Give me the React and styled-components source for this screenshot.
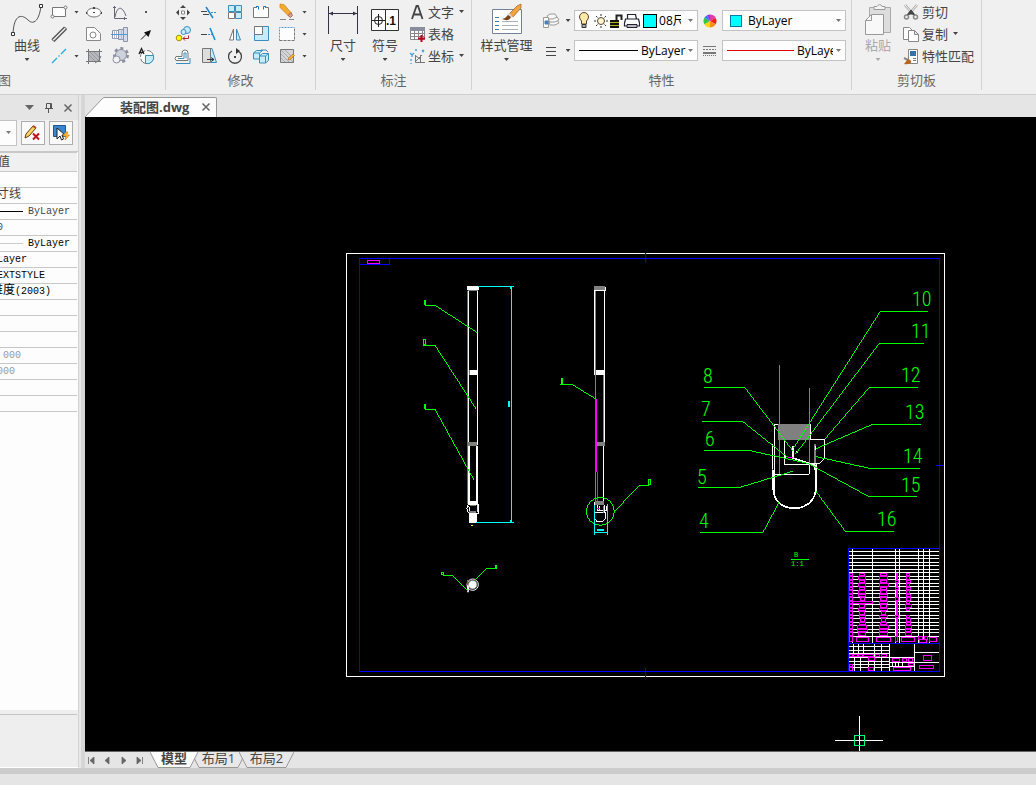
import React from 'react';
import styled, { createGlobalStyle } from 'styled-components';

const GlobalStyle = createGlobalStyle`
  * {
    box-sizing: border-box;
  }

  body {
    margin: 0;
    background: #e5e5e5;
    color: #444;
    font: 13px/18px 'Open Sans', 'Noto Sans CJK SC', sans-serif;
  }

  button, select {
    margin: 0;
    padding: 0;
    border: 0;
    border-radius: 0;
    background: none;
    color: inherit;
    font: inherit;
  }
`;

const Page = styled.div`
  display: flex;
  flex-direction: column;
  height: 100vh;
  overflow: hidden;
`;

const Ribbon = styled.header`
  display: flex;
  height: 95px;
  flex-shrink: 0;
  padding-bottom: 4px;
  background: #f0f0f0;
  border-bottom: 1px solid #cfcfcf;
`;

const Group = styled.section`
  display: flex;
  flex-direction: column;
  flex: none;
  padding-top: 1px;
  border-right: 1px solid #d2d2d2;
`;

const GroupBody = styled.div`
  display: flex;
  height: 70px;
  padding: 0 ${(props) => props.$right}px 0 ${(props) => props.$left}px;
`;

const GroupTitle = styled.h2`
  margin: 0;
  color: #666;
  font-size: 13px;
  font-weight: 400;
  line-height: 18px;
  text-align: ${(props) => props.$align || 'center'};
`;

const LargeButton = styled.button`
  display: flex;
  flex-direction: column;
  align-items: center;
  width: ${(props) => props.$width || 42}px;
  padding-top: 2px;
  white-space: nowrap;

  &:disabled {
    color: #aaa;
  }
`;

const LargeIcon = styled.svg`
  width: 34px;
  height: 34px;
  flex: none;
`;

const LargeLabel = styled.span`
  height: 21px;
  line-height: 17px;
`;

const Arrow = styled.i`
  width: 5px;
  height: 3px;
  flex: none;
  background: ${(props) => props.$color || '#444'};
  clip-path: polygon(0 0, 100% 0, 50% 100%);
`;

const ToolGrid = styled.div`
  display: grid;
  grid-template-columns: ${(props) => props.$columns};
  grid-auto-rows: 22px;
`;

const ToolButton = styled.button`
  display: flex;
  align-items: center;
  justify-content: center;
`;

const SmallIcon = styled.svg`
  width: 20px;
  height: 20px;
  flex: none;
`;

const CommandList = styled.div`
  display: flex;
  flex-direction: column;
  padding-left: 1px;
`;

const Command = styled.button`
  display: flex;
  align-items: center;
  height: 22px;
  padding-bottom: 1px;
  gap: 1px;
  white-space: nowrap;

  ${Arrow} {
    margin-left: 4px;
  }
`;

const PropertyGrid = styled.div`
  display: grid;
  grid-template-columns: 22px 12px 124px 24px 124px;
  grid-auto-rows: 21px;
  gap: 9px 0;
  padding-top: 9px;
`;

const Combo = styled.label`
  display: flex;
  align-items: center;
  min-width: 0;
  padding: 0 4px;
  background: #fdfdfd;
  border: 1px solid #c3c3c3;
  color: #000;
  font-size: 12px;
`;

const ComboSelect = styled.select`
  flex: ${(props) => (props.$width ? 'none' : '1')};
  width: ${(props) => (props.$width ? `${props.$width}px` : 'auto')};
  min-width: 0;
  height: 19px;
  margin-left: ${(props) => props.$gap || 0}px;
  appearance: none;
  outline: none;
  text-overflow: clip;
`;

const ComboArrow = styled(Arrow)`
  margin-left: auto;
`;

const Swatch = styled.i`
  width: ${(props) => props.$size}px;
  height: ${(props) => props.$size}px;
  flex: none;
  margin-left: ${(props) => props.$gap || 0}px;
  background: #0ff;
  border: 1px solid ${(props) => props.$border};
`;

const LineSample = styled.i`
  width: ${(props) => props.$width}px;
  height: 1px;
  flex: none;
  background: ${(props) => props.$color};
`;

const Workspace = styled.main`
  display: flex;
  flex: 1;
  min-height: 0;
`;

const Panel = styled.aside`
  display: flex;
  flex-direction: column;
  width: 79px;
  flex: none;
  overflow: hidden;
  background: #eee;
  border-right: 1px solid #d2d2d2;
  border-bottom: 1px solid #fff;
`;

const PanelHeader = styled.div`
  display: flex;
  align-items: center;
  justify-content: flex-end;
  height: 25px;
  flex: none;
  padding-right: 1px;
  background: #e5e5e5;
`;

const PanelHeaderButton = styled.button`
  display: flex;
  align-items: center;
  justify-content: center;
  width: 19px;
`;

const PanelTools = styled.div`
  display: flex;
  align-items: center;
  height: 31px;
  flex: none;
  padding-bottom: 6px;
  gap: 4px;
  background: #f0f0f0;
`;

const FilterSelect = styled.label`
  display: flex;
  align-items: center;
  width: 17px;
  height: 26px;
  padding: 0 5px 0 0;
  background: #fdfdfd;
  border: 1px solid #c3c3c3;
  border-left: 0;
`;

const FramedButton = styled.button`
  display: flex;
  align-items: center;
  justify-content: center;
  width: 24px;
  height: 24px;
  background: #fafafa;
  border: 1px solid #adadad;
`;

const PropertySheet = styled.div`
  flex: 1;
  min-height: 0;
  padding-right: 1px;
  background: #fdfdfd;
  border-top: 1px solid #c8c8c8;
`;

const PropertyTable = styled.table`
  width: 100%;
  border-collapse: collapse;
  border-top: 1px solid #c8c8c8;
  table-layout: fixed;
  font: 12px/15px 'Liberation Mono', 'Noto Sans CJK SC', monospace;

  th {
    height: 19px;
    padding: 2px 0 0;
    background: #f0f0f0;
    border-bottom: 1px solid #c8c8c8;
    font-weight: 400;
    text-align: left;
    text-indent: -2px;
  }
`;

const PropertyCell = styled.td`
  height: 16px;
  padding: 0;
  border-bottom: 1px solid #c8c8c8;
  color: ${(props) => props.$color || '#444'};
  font-size: ${(props) => (props.$latin ? 10 : 12)}px;
  line-height: 15px;
  text-indent: ${(props) => props.$indent}px;
  white-space: nowrap;
`;

const LineValue = styled.span`
  display: flex;
  align-items: center;
  gap: 5px;
  text-indent: 0;
`;

const PanelHint = styled.div`
  height: 57px;
  flex: none;
  margin-right: 1px;
  border-top: 4px solid #eee;

  &::before {
    content: '';
    display: block;
    border-top: 1px solid #c3c3c3;
  }
`;

const Splitter = styled.div`
  width: 6px;
  flex: none;
  background: #d6d6d6;
  border-left: 2px solid #e8e8e8;
`;

const DocumentArea = styled.div`
  display: flex;
  flex-direction: column;
  flex: 1;
  min-width: 0;
`;

const DocumentTabs = styled.nav`
  display: flex;
  align-items: flex-end;
  height: 22px;
  flex: none;
`;

const TabSlope = styled.svg`
  width: 20px;
  height: 20px;
`;

const DocumentTab = styled.div`
  display: flex;
  align-items: center;
  height: 20px;
  padding: 0 1px 2px 15px;
  gap: 7px;
  background: #fdfdfd;
  border: solid #999;
  border-width: 1px 1px 0 0;
  border-radius: 0 2px 0 0;
  font-size: 13px;
  font-weight: 700;
`;

const Canvas = styled.svg`
  display: block;
  width: 100%;
  min-height: 0;
  flex: 1;
  background: #000;
`;

const LayoutBar = styled.nav`
  display: flex;
  height: 17px;
  flex: none;
  border-top: 1px solid #666;
`;

const NavButton = styled.button`
  display: flex;
  align-items: center;
  width: 16px;
  padding-left: 2px;
`;

const LayoutTab = styled.button`
  display: grid;
  width: ${(props) => props.$width}px;
  margin-left: ${(props) => (props.$active ? 1 : -7)}px;
  z-index: ${(props) => (props.$active ? 1 : 0)};
  font-weight: ${(props) => (props.$active ? 700 : 400)};
  line-height: 13px;

  > * {
    grid-area: 1 / 1;
  }
`;

const LayoutShape = styled.svg`
  width: 100%;
  height: 16px;
`;

const StatusBar = styled.footer`
  height: 17px;
  flex: none;
  border-top: 6px solid #ccc;
`;

const steel = '#667';
const blue = '#3c8dbc';
const pale = '#c4ecfb';

const icons = {
  rect: (
    <g fill="#fdfdfd" stroke="#777">
      <path d="M3.500 5.500h13v9h-13z" />
      <circle cx="3.500" cy="14.500" r="1.500" />
      <circle cx="16.500" cy="5.500" r="1.500" />
    </g>
  ),
  ellipse: (
    <g fill="#fdfdfd" stroke="#777">
      <ellipse cx="10" cy="10.500" rx="7" ry="4.500" />
      <path d="M9 5h2v2H9zM2 10h1v2H2zM17 10h1v2h-1z" fill="#444" stroke="none" />
      <path d="M9 10.500h2" stroke="#444" />
    </g>
  ),
  graph: <path d="M4.500 4v12.500H17M3 5.500h3M14.500 15v3M5 15C7 4 12 3 16 14" fill="none" stroke={steel} />,
  point: <path d="M9 9h2v2H9z" fill="#555" />,
  parallel: (
    <g stroke="#555" fill="none">
      <path d="M3 15.500 15.500 3M5 17.500 17.500 5" strokeWidth="1.400" />
      <path d="m3 15.500 2 2M15.500 3l2 2" />
    </g>
  ),
  region: (
    <g fill="#fdfdfd" stroke="#888">
      <path d="M2.500 3.500h8l6 6v7h-14z" />
      <circle cx="9" cy="11" r="3" />
    </g>
  ),
  screw: (
    <g stroke="#8a93ab">
      <path d="M2.500 6.500h6v8h-6z" fill="#fff" />
      <path d="M8.500 5.500h5v10h-5zM13.500 3.500h4v14h-4z" fill="#d5dae8" />
      <path d="M4.500 6.500v8M6.500 6.500v8M11.500 5.500v10" fill="none" stroke="#b4bbcc" />
      <path d="M1 10.500h17" stroke="#4b9bd8" fill="none" />
    </g>
  ),
  leader: (
    <g fill="#111">
      <path d="M5 15.500 11 9.500" stroke="#111" />
      <path d="m15 6-7 2.500 4.500 4.500z" />
    </g>
  ),
  line: <path d="m3 17 5-5m1.500-1.500 1-1M12 8l5-5" stroke="#28abe0" fill="none" strokeWidth="1.400" />,
  hatch: (
    <g stroke="#777" fill="none">
      <path d="M4.500 5.500h11v10h-11z" fill="#b5b8bf" />
      <path d="M2 5.500h16M2 15.500h15M4.500 3v15M15.500 3v10" />
      <path d="M6 6l9 9M10 6l5 5M5 9l6 6" stroke="#999" />
      <path d="M11 17q5-2 6-7" />
    </g>
  ),
  gear: (
    <g stroke="#8b90a0" fill="#ccd1dc">
      <circle cx="11" cy="9" r="6.500" fill="none" strokeWidth="3" strokeDasharray="2.920 2.920" />
      <circle cx="11" cy="9" r="5.500" />
      <circle cx="6.500" cy="13.500" r="3.500" fill="#f3f3f3" />
    </g>
  ),
  circleA: (
    <g>
      <circle cx="11" cy="11" r="6.500" fill="#fff" stroke="#777" strokeDasharray="8 2" />
      <path d="M9.500 9.500h8a6.500 6.500 0 0 1-8 8z" fill={pale} stroke={blue} />
      <path d="m3 8 2.500-5.500L8 8M4 6.500h3" fill="none" stroke="#222" strokeWidth="1.300" />
    </g>
  ),
  move: (
    <g fill="#444">
      <path d="m10 3-3 3h6zM10 18l-3-3h6zM3 10.500l3-3v6zM17 10.500l-3-3v6z" />
      <path d="M8.500 9h3v3h-3z" fill="#fff" stroke="#888" />
    </g>
  ),
  trim: (
    <g fill="none">
      <path d="M2 9.500h6M4 12.500h6" stroke="#444" />
      <path d="M12 10.500h6" stroke={blue} strokeDasharray="2 1" />
      <path d="m7 5 7 11" stroke="#1686cf" strokeWidth="1.500" />
    </g>
  ),
  array: (
    <g stroke={blue} fill={pale}>
      <path d="M3.500 3.500h6v6h-6zM10.500 3.500h6v6h-6zM10.500 10.500h6v6h-6z" />
      <path d="M3.500 10.500h6v6h-6z" fill="#fff" stroke="#777" />
    </g>
  ),
  breakAt: (
    <g fill="#fdfdfd" stroke="#777">
      <path d="M6 5.500H2.500v10h15v-10H14" />
      <path d="M5 4.500h2.500v3M15 4.500h-2.500v3" stroke="#1d79bd" fill="none" />
    </g>
  ),
  erase: (
    <g>
      <path d="m3 2 4 .5 7 8-3 3-8-8z" fill="#f4a92f" stroke="#c9861d" strokeWidth=".7" />
      <path d="m11 13.500 3-3 1.500 3-2 2z" fill="#dfa08a" stroke="#8d4b3b" strokeWidth=".7" />
      <path d="M3 17.500h6m3 0h5" stroke="#888" />
    </g>
  ),
  copy: (
    <g>
      <circle cx="14" cy="6" r="3.500" fill={pale} stroke={blue} />
      <circle cx="10.500" cy="8" r="2.500" fill={pale} stroke={blue} />
      <circle cx="6" cy="14" r="2.800" fill="#ff0" stroke="#aa8d14" />
      <path d="M10 14.500h5.500v-3m-3.500 1-2 2 2 2" fill="none" stroke="#b2222a" />
    </g>
  ),
  extend: (
    <g fill="none">
      <path d="M2 10.500h6" stroke="#444" />
      <path d="M9 10.500h4" stroke={blue} strokeDasharray="2 1" />
      <path d="m11 4 5 12" stroke="#1686cf" strokeWidth="1.500" />
    </g>
  ),
  mirror: (
    <g stroke="#777">
      <path d="m8.500 5 0 11h-4z" fill="#fff" />
      <path d="m11.500 5 0 11h4z" fill={pale} stroke={blue} />
    </g>
  ),
  scale: (
    <g>
      <path d="M3.500 2.500h14v14h-14z" fill={pale} stroke={blue} />
      <path d="M3.500 2.500h8v8h-8z" fill="#fff" stroke="#777" />
    </g>
  ),
  stretch: (
    <g fill="none">
      <path d="M2.500 3.500h15v13h-15z" fill="#fdfdfd" stroke="none" />
      <path d="M2.500 16.500v-13h15" stroke="#4b9bd8" strokeDasharray="2 1" />
      <path d="M2.500 16.500h15v-13" stroke="#777" strokeDasharray="3 1" />
    </g>
  ),
  offset: (
    <g fill="none">
      <path d="M3 10.500h6V7a3 3 0 0 1 6 0v7.500H3q-2-2 0-4z" stroke="#777" fill="#fdfdfd" />
      <path d="M5 12.500h6V7h2v5.500M3 17.500h14V12" stroke={blue} />
    </g>
  ),
  taper: (
    <g>
      <path d="M11 2.500h2l4.500 14H11z" fill={pale} stroke={blue} />
      <path d="M3.500 2.500h8v14h-8z" fill="#ddd" stroke="#777" />
      <path d="M8 13.500h7m-3-2 3 2-3 2" fill="none" stroke="#333" />
    </g>
  ),
  rotate: (
    <g fill="none" stroke="#444">
      <path d="M13 5a6.500 6.500 0 1 1-6 0" strokeWidth="1.300" />
      <path d="m11 2 4 3-4 3z" fill="#333" stroke="none" />
      <path d="M9 10h2v2H9z" fill="#444" stroke="none" />
    </g>
  ),
  blocks: (
    <g fill={pale} stroke={blue}>
      <path d="m2.500 7 3-2.500h6l-3 2.500v6h-6zM2.500 7h6" />
      <path d="m8.500 10 3-2.500h6v7l-3 2.500h-6zM8.500 10h6v7m0-7 3-2.500" />
      <path d="M10 4h5l2 2" fill="none" />
    </g>
  ),
  hatchEdit: (
    <g fill="none">
      <path d="M3.500 3.500h13v13h-13z" fill="#d3d5d9" stroke="#777" />
      <path d="m4 8 8 8M8 4l8 8M4 4l12 12M4 12l4 4" stroke="#aaa" />
      <path d="m11 14 1-2.500L16 8l1.500 1.500-4 4z" fill="#f6ad34" stroke="#a35e1d" strokeWidth=".5" />
    </g>
  ),
  letterA: <path d="m5 17 4.500-13h1.500L15.500 17M7 12.500h7" fill="none" stroke="#444" strokeWidth="1.800" />,
  table: (
    <g fill="#fdfdfd" stroke="#888">
      <path d="M3.500 4.500h14v11h-14zM3 9.500h14M3 12.500h14M7.500 6v10M11.500 6v10M15.500 6v7" />
      <path d="M3 3h15v4H3z" fill="#888e9c" stroke="none" />
      <path d="M14.500 11v7M11 14.500h7" stroke="#c00018" strokeWidth="2" />
    </g>
  ),
  coordinate: (
    <g fill="none">
      <path d="m3 7 2 2 2-2M5 9v2M8 4h2M15 4l2 2m0-2-2 2M4 13v2M4 17v1" stroke="#4b9bd8" strokeWidth="1.300" />
      <path d="M8.500 9v7.500H18M8 16l7-7M13.500 9v8M9 10l4 3" stroke="#777" />
    </g>
  ),
  layerMatch: (
    <g fill="#f8f8f8" stroke="#9a9a9a">
      <path d="m8 11 3-2h5l2 3-4 2H9z" />
      <path d="m7 8 3-2h6l2 3-4 2H9z" />
      <path d="m6 5 3-2h5l2 3-4 2H8z" />
      <path d="M2.500 6.500h5v10h-5z" fill="#fff" />
      <path d="M4 10h3v3H4z" fill="#4b83b9" stroke="#4b83b9" />
    </g>
  ),
  lineWeight: <path d="M5 6.500h10M5 10.500h10M5 14.500h10" stroke="#444" shapeRendering="crispEdges" />,
  lineType: (
    <g stroke="#777" shapeRendering="crispEdges">
      <path d="M3 5.500h13" />
      <path d="M3 8.500h13" strokeDasharray="2 1" />
      <path d="M3 11.500h13" strokeWidth="2" />
      <path d="M3 14.500h13" strokeDasharray="1 1" />
    </g>
  ),
  wheel: (
    <g>
      <path d="M10 10V3.500a6.500 6.500 0 0 1 5.600 3.300z" fill="#e23ba8" />
      <path d="M10 10l5.600-3.200a6.500 6.500 0 0 1 0 6.500z" fill="#f21c1c" />
      <path d="M10 10l5.600 3.300A6.500 6.500 0 0 1 10 16.500z" fill="#ff8c1a" />
      <path d="M10 10v6.500a6.500 6.500 0 0 1-5.600-3.200z" fill="#f4d514" />
      <path d="m10 10-5.600 3.300a6.500 6.500 0 0 1 0-6.500z" fill="#33c24a" />
      <path d="M10 10 4.400 6.800a6.500 6.500 0 0 1 2.400-2.400z" fill="#2e7df0" />
      <path d="M10 10 6.800 4.400A6.500 6.500 0 0 1 10 3.500z" fill="#8d3bea" />
    </g>
  ),
  cut: (
    <g fill="none" stroke="#888">
      <path d="m4 3 8 9M16 3l-8 9" stroke="#aaa" strokeWidth="2.600" />
      <path d="m4 3 8 9M16 3l-8 9" stroke="#f5f5f5" />
      <path d="m10 8 4 5-3-1h-2l-3 1z" fill="#444" stroke="#444" />
      <circle cx="5.500" cy="15" r="2" strokeWidth="1.500" />
      <circle cx="14.500" cy="15" r="2" strokeWidth="1.500" />
    </g>
  ),
  copyPages: (
    <g fill="#fff" stroke="#888">
      <path d="M2.500 3.500h6l3 3v9h-9z" />
      <path d="M7.500 6.500h6l4 4v7h-10zM13.500 6.500v4h4" />
    </g>
  ),
  matchProps: (
    <g>
      <path d="M7.500 3.500h9v14h-9z" fill="#fff" stroke="#888" />
      <path d="M9 5h6v5H9z" fill="#3472ac" />
      <path d="M12 12.500h3M12 14.500h3" stroke="#777" />
      <path d="m3 12 4 2" stroke="#888" strokeWidth="2" />
      <path d="M7 13q4 1 3 4-4 2-7 1z" fill="#b5651d" />
    </g>
  ),
  pencilDelete: (
    <g>
      <path d="m2 15 1-4 7-8 3 2-7 8z" fill="#ffd45a" stroke="#6b3d12" />
      <path d="m10 3 3 2" stroke="#b5422c" strokeWidth="2" />
      <path d="m10 10.500 6 6m0-6-6 6" stroke="#c4151c" strokeWidth="2" />
    </g>
  ),
  quickSelect: (
    <g>
      <path d="M2.500 2.500h12v11h-12z" fill="#3c86cf" stroke="#1e568f" />
      <path d="M6 5v11l3-3 1.500 4 2-1-1.500-4h3z" fill="#fff" stroke="#222" />
      <path d="m15 9-3 4h3l-1 4 4.500-5h-3l1.500-3z" fill="#ffc433" stroke="#d97f0d" strokeWidth=".7" />
    </g>
  ),
  close: <path d="m6.500 6.500 7 7m0-7-7 7" stroke="#666" strokeWidth="1.500" />,
  pin: <path d="M7.500 10V5.500h5V10M11.500 5v5M6 10.500h8M9.500 11v4" fill="none" stroke="#555" />,
};

function Icon({ name }) {
  return (
    <SmallIcon viewBox="0 0 20 20" aria-hidden="true">
      {icons[name]}
    </SmallIcon>
  );
}

function Tool({ name, label }) {
  return (
    <ToolButton type="button" aria-label={label}>
      {name === 'more' ? <Arrow /> : <Icon name={name} />}
    </ToolButton>
  );
}

const drawTools = [
  ['rect', '矩形'], ['more', '矩形选项'], ['ellipse', '椭圆'], ['graph', '公式曲线'], ['point', '点'],
  ['parallel', '平行线'], null, ['region', '局部放大'], ['screw', '轴'], ['leader', '箭头'],
  ['line', '中心线'], ['more', '中心线选项'], ['hatch', '填充'], ['gear', '齿轮'], ['circleA', '圆弧'],
];

const editTools = [
  ['move', '移动'], ['trim', '裁剪'], ['array', '阵列'], ['breakAt', '打断'], ['erase', '删除'], ['more', '删除选项'],
  ['copy', '平移复制'], ['extend', '延伸'], ['mirror', '镜像'], ['scale', '缩放'], ['stretch', '拉伸'], ['more', '拉伸选项'],
  ['offset', '等距线'], ['taper', '过渡'], ['rotate', '旋转'], ['blocks', '分解'], ['hatchEdit', '编辑填充'], ['more', '编辑选项'],
];

function Tools({ items, columns }) {
  return (
    <ToolGrid $columns={columns}>
      {items.map((item, i) => (
        item ? <Tool key={item[1]} name={item[0]} label={item[1]} /> : <span key={i} />
      ))}
    </ToolGrid>
  );
}

function LayerIcons() {
  return (
    <svg width="61" height="17" viewBox="0 0 61 17" aria-hidden="true">
      <path d="M.5 5a4.500 4.500 0 0 1 9 0q0 2-2 4v3h-5V9q-2-2-2-4z" fill="#ffe9a8" stroke="#54452a" />
      <path d="M3 12.500h4v3H3z" fill="#aaa" stroke="#333" />
      <circle cx="22" cy="9" r="3.500" fill="#fff5cf" stroke="#5b452c" />
      <path d="M22 2v2m0 10v2M15 9h2m10 0h2M17 4l1.500 1.500m7 7L27 14m0-10-1.500 1.500m-7 7L17 14" stroke="#333" />
      <path d="M31 8h9v8h-9z" fill="#111" />
      <path d="M31 10.500h9M31 13.500h9" stroke="#b2b21c" />
      <path d="M37.500 8V3.500h5V8" fill="none" stroke="#222" strokeWidth="2" />
      <path d="M48.500 7V2.500h8l1 4.500M46.500 7h13l1 4v3h-15v-3z" fill="#fff" stroke="#223" strokeWidth="1.200" />
      <path d="M48 12.500h10v3H48z" fill="#bbb" stroke="#223" />
    </svg>
  );
}

const DrawTitle = styled.span`
  margin-left: -2px;
`;

function RibbonBar() {
  return (
    <Ribbon>
      <Group>
        <GroupBody $left={8} $right={6}>
          <LargeButton type="button" $width={38}>
            <LargeIcon viewBox="0 0 34 34">
              <path d="M3 31c1-22 10-19 15-14s11 2 13-14" fill="none" stroke="#555" />
              <path d="M1.500 29.500h3v3h-3zM29.500 1.500h3v3h-3z" fill="#fff" stroke="#333" />
            </LargeIcon>
            <LargeLabel>曲线</LargeLabel>
            <Arrow />
          </LargeButton>
          <Tools items={drawTools} columns="26px 9px 26px 26px 26px" />
        </GroupBody>
        <GroupTitle $align="left"><DrawTitle>图</DrawTitle></GroupTitle>
      </Group>

      <Group>
        <GroupBody $left={4} $right={6}>
          <Tools items={editTools} columns="repeat(5, 26px) 9px" />
        </GroupBody>
        <GroupTitle>修改</GroupTitle>
      </Group>

      <Group>
        <GroupBody $left={6} $right={7}>
          <LargeButton type="button">
            <LargeIcon viewBox="0 0 34 34">
              <path d="M2.500 3v28M31.500 3v28M3 10.500h28" stroke="#334" />
              <path d="m3 10.500 4-2v4zM31 10.500l-4-2v4z" fill="#334" />
            </LargeIcon>
            <LargeLabel>尺寸</LargeLabel>
            <Arrow />
          </LargeButton>
          <LargeButton type="button">
            <LargeIcon viewBox="0 0 34 34">
              <path d="M3.500 6.500h27v21h-27zM17.500 6v21" fill="#fff" stroke="#333" />
              <circle cx="10.500" cy="17.500" r="4" fill="none" stroke="#222" />
              <path d="M4 17.500h13M10.500 11v13" stroke="#222" />
              <text x="18" y="22" fill="#111" fontSize="12" fontWeight="700" fontFamily="Liberation Sans, sans-serif">.1</text>
            </LargeIcon>
            <LargeLabel>符号</LargeLabel>
            <Arrow />
          </LargeButton>
          <CommandList>
            <Command type="button"><Icon name="letterA" />文字<Arrow /></Command>
            <Command type="button"><Icon name="table" />表格</Command>
            <Command type="button"><Icon name="coordinate" />坐标<Arrow /></Command>
          </CommandList>
        </GroupBody>
        <GroupTitle>标注</GroupTitle>
      </Group>

      <Group>
        <GroupBody $left={1} $right={5}>
          <LargeButton type="button" $width={67}>
            <LargeIcon viewBox="0 0 34 34">
              <path d="M2.500 6.500h29v24h-29z" fill="#fff" stroke="#748298" />
              <path d="M5 14.500h4M5 18.500h4M5 22.500h4M5 26.500h4" stroke="#4c78a8" />
              <path d="M12 18.500h16M12 22.500h16M12 26.500h16" stroke="#aab1bb" />
              <path d="m19 11 8-8 4-2v4l-8 9z" fill="#f1a342" stroke="#a15e1c" strokeWidth=".7" />
              <path d="m19 10 4 4-2 1-4-3z" fill="#ddd" />
              <path d="M12 16q4-1 6-4l3 2q-2 5-9 2z" fill="#7e431b" />
            </LargeIcon>
            <LargeLabel>样式管理</LargeLabel>
            <Arrow />
          </LargeButton>
          <PropertyGrid>
            <Tool name="layerMatch" label="图层" />
            <Tool name="more" label="图层选项" />
            <Combo>
              <LayerIcons />
              <Swatch $size={14} $gap={3} $border="#000" />
              <ComboSelect aria-label="当前图层" $width={22} $gap={2} defaultValue="08尺">
                <option>08尺</option>
              </ComboSelect>
              <ComboArrow $color="#777" />
            </Combo>
            <Tool name="wheel" label="颜色" />
            <Combo>
              <Swatch $size={12} $gap={3} $border="#07a" />
              <ComboSelect aria-label="颜色" $gap={6}><option>ByLayer</option></ComboSelect>
              <ComboArrow $color="#777" />
            </Combo>

            <Tool name="lineWeight" label="线宽" />
            <Tool name="more" label="线宽选项" />
            <Combo>
              <LineSample $width={59} $color="#000" />
              <ComboSelect aria-label="线宽" $gap={3}><option>ByLayer</option></ComboSelect>
              <ComboArrow $color="#777" />
            </Combo>
            <Tool name="lineType" label="线型" />
            <Combo>
              <LineSample $width={67} $color="#e00000" />
              <ComboSelect aria-label="线型" $width={36} $gap={3}><option>ByLayer</option></ComboSelect>
              <ComboArrow $color="#777" />
            </Combo>
          </PropertyGrid>
        </GroupBody>
        <GroupTitle>特性</GroupTitle>
      </Group>

      <Group>
        <GroupBody $left={4} $right={7}>
          <LargeButton type="button" disabled $width={44}>
            <LargeIcon viewBox="0 0 34 34">
              <path d="M8.500 4.500h21v25h-21z" fill="#ddd" stroke="#aaa" />
              <path d="M13 6.500h11v-3h-3q-2-4-5 0h-3z" fill="#f4f4f4" stroke="#999" />
              <path d="M10.500 11.500h12v20h-18v-14z" fill="#f8f8f8" stroke="#999" />
              <path d="M10.500 11.500v6h-6" fill="none" stroke="#999" />
            </LargeIcon>
            <LargeLabel>粘贴</LargeLabel>
            <Arrow $color="#aaa" />
          </LargeButton>
          <CommandList>
            <Command type="button"><Icon name="cut" />剪切</Command>
            <Command type="button"><Icon name="copyPages" />复制<Arrow /></Command>
            <Command type="button"><Icon name="matchProps" />特性匹配</Command>
          </CommandList>
        </GroupBody>
        <GroupTitle>剪切板</GroupTitle>
      </Group>
    </Ribbon>
  );
}

const properties = [
  {},
  { text: '寸线', indent: -3 },
  { text: 'ByLayer', line: '#000', latin: true },
  { text: '0', indent: -3, latin: true },
  { text: 'ByLayer', line: '#ccc', color: '#000', latin: true },
  { text: 'Layer', indent: -3, color: '#000', latin: true },
  { text: 'EXTSTYLE', indent: -3, color: '#000', latin: true },
  { text: '维度', suffix: '(2003)', indent: -9, color: '#000' },
  {},
  {},
  {},
  { text: '000', indent: 3, color: '#999', latin: true },
  { text: '000', indent: -3, color: '#999', latin: true },
  {},
  {},
];

const SmallSuffix = styled.span`
  font-size: 10px;
`;

function PropertyPanel() {
  return (
    <Panel>
      <PanelHeader>
        <PanelHeaderButton type="button" aria-label="菜单">
          <svg width="9" height="5"><path d="M0 0h9L4.500 5z" fill="#666" /></svg>
        </PanelHeaderButton>
        <PanelHeaderButton type="button" aria-label="固定"><Icon name="pin" /></PanelHeaderButton>
        <PanelHeaderButton type="button" aria-label="关闭"><Icon name="close" /></PanelHeaderButton>
      </PanelHeader>
      <PanelTools>
        <FilterSelect>
          <ComboSelect aria-label="选择对象"><option label=" " /></ComboSelect>
          <ComboArrow $color="#777" />
        </FilterSelect>
        <FramedButton type="button" aria-label="清除选择"><Icon name="pencilDelete" /></FramedButton>
        <FramedButton type="button" aria-label="快速选择"><Icon name="quickSelect" /></FramedButton>
      </PanelTools>
      <PropertySheet>
        <PropertyTable>
          <thead>
            <tr><th scope="col">值</th></tr>
          </thead>
          <tbody>
            {properties.map((row, i) => (
              <tr key={i}>
                <PropertyCell $indent={row.indent || 0} $color={row.color} $latin={row.latin}>
                  {row.line ? (
                    <LineValue>
                      <LineSample $width={23} $color={row.line} />
                      {row.text}
                    </LineValue>
                  ) : row.text}
                  {row.suffix && <SmallSuffix>{row.suffix}</SmallSuffix>}
                </PropertyCell>
              </tr>
            ))}
          </tbody>
        </PropertyTable>
      </PropertySheet>
      <PanelHint />
    </Panel>
  );
}

const callouts = [
  ['8', 703, 383], ['7', 701, 416], ['6', 705, 446], ['5', 697, 484], ['4', 699, 528],
  ['10', 912, 306], ['11', 911, 338], ['12', 901, 382], ['13', 905, 419],
  ['14', 903, 463], ['15', 901, 492], ['16', 877, 526],
];

// widths of the outlined text boxes in the parts list, one entry per row
const partColumns = [
  { x: 213, widths: [9, 9, 9, 9, 9, 12, 12, 9, 9, 9, 9, 9, 9, 9, 9, 9, 9, 9] },
  { x: 247, widths: [15, 21, 15, 21, 15, 21, 21, 12, 60, 15, 21, 15, 18, 12, 18, 27, 30, 21] },
  { x: 311, widths: [18, 24, 18, 27, 18, 18, 24, 18, 24, 18, 24, 12, 24, 12, 18, 27, 24, 24] },
  { x: 351, widths: [5, 5, 9, 5, 9, 5, 5, 9, 5, 5, 5, 5, 9, 5, 5, 5, 5, 5] },
  { x: 385, widths: [9, 9, 12, 9, 12, 9, 12, 12, 9, 18, 9, 0, 9, 12, 12, 18, 15, 18] },
];

const titleBoxes = [
  [208, 290, 9, 16], [231, 294, 36, 11], [291, 294, 41, 11], [347, 290, 6, 16], [366, 294, 39, 11],
  [417, 290, 12, 10], [433, 290, 10, 10], [420, 299, 20, 8], [450, 294, 21, 11],
  [208, 343, 10, 8], [222, 343, 12, 8], [237, 343, 12, 8], [252, 343, 30, 8], [288, 343, 12, 8],
  [306, 343, 15, 8], [267, 352, 17, 10], [208, 373, 10, 8], [208, 384, 10, 8], [267, 384, 15, 8],
  [337, 355, 22, 11], [369, 357, 12, 8], [387, 357, 12, 8], [387, 370, 14, 7], [342, 382, 50, 11],
  [430, 346, 24, 15], [420, 376, 42, 11],
];

function TitleBlock() {
  const lines = Array.from({ length: 25 }, (_, i) => `M207 ${34 + Math.round(i * 3.54) * 3}h270`).join('');
  return (
    <g transform="translate(780 540) scale(.333333)" fill="none" strokeWidth="3">
      <g stroke="#fff">
        <path d={lines} />
        <path d="M217 25v284M277 25v284M346 25v284M358 25v284M415 25v284M430 25v275M448 25v284" />
        <path d="M205 319h123M205 331h123M205 340h123M205 352h123M205 364h123M205 373h123M205 382h123" />
        <path d="M283 310v84M304 310v84M328 310v84M403 310v84M220 310v32M235 310v32M250 310v32M223 352v42M241 352v42M265 352v42" />
        <path d="M328 352h75M328 367h75M328 379h75M403 337h75M403 367h75M337 367v12M346 367v12M355 367v12M367 352v27M385 352v27" />
      </g>
      <g stroke="#f0f">
        {partColumns.map((column) => column.widths.map((w, row) => (
          w > 0 && <rect key={`${column.x}-${row}`} x={column.x - w / 2} y={100 + row * 10.5} width={w} height={8} />
        )))}
        {titleBoxes.map(([x, y, w, h]) => <rect key={`${x}-${y}`} x={x} y={y} width={w} height={h} />)}
      </g>
      <path d="M205 25h273M205 25v369M205 310h273M478 25v369" stroke="#00f" />
    </g>
  );
}

function Assembly() {
  return (
    <g transform="translate(400 250) scale(.333333)" fill="none" strokeWidth="3">
      <g stroke="#fff">
        <path d="M206 120v635M233 120v465M209 588v166M230 588v166" />
        <path d="M232 588v166" />
        <path d="M201 108h36v12h-36zM210 361h22v13h-22zM204 754h30v9h-30zM208 790h22v28h-22z" fill="#fff" stroke="none" />
        <path d="M236 764v26h-30l-6-14 4-12h32M200 770h8v14" />
        <path d="M583 122v238M613 122v454M610 588v166M583 122h34v-12M583 756v32h32v-24M584 790v15q3 11 15 11t17-11v-20M592 765v17h28v-14M598 768v12" />
        <path d="M582 361h32v13h-32z" fill="#fff" stroke="none" />
      </g>
      <g stroke="#808080">
        <path d="M205 122h30M586 122v636M610 375v200M210 361v13" />
        <path d="M204 576h27v12h-27zM582 108h33v12h-33zM587 576h28v12h-28zM586 753h25v12h-25zM208 783h20v6h-20z" fill="#808080" stroke="none" />
        <path d="M210 768h18M610 768v20" />
      </g>
      <g shapeRendering="auto">
        <circle cx="218" cy="1004" r="17" stroke="#fff" />
        <circle cx="218" cy="1004" r="13" fill="#fff" stroke="#808080" />
        <path d="M204 1006v21" stroke="#fff" strokeWidth="5" />
      </g>
      <g stroke="#f0f">
        <path d="M202 123v639M592 665v88M590 777h10M203 990v14" />
        <path d="M589 448v217" strokeWidth="5" />
      </g>
      <path d="M233 765v20M213 827h6" stroke="#ff0" />
      <g stroke="#0f0">
        <path d="M75 150v16h30l127 82M75 462v16h30l117 212M105 286l123 190M105 286H70" />
        <path d="M70 268h7v17h-7zM745 688h7v17h-7zM124 967h7v8h-7z" />
        <path d="M486 384v19h30l73 45M748 706h-30l-73 77M480 403h10M128 976h28l48 46M290 945v10h-31l-34 34" />
        <path d="M75 150v16M486 384v19M75 462v16M288 946v8" strokeWidth="6" />
        <circle cx="601" cy="784" r="42" />
      </g>
      <g stroke="#0ff">
        <path d="M235 109h107M228 817h114M334 110v707M331 110v6M331 817v-6M583 765v90M622 762v93M583 847h39" />
        <path d="M327 453v18M591 840h21" strokeWidth="6" />
      </g>
    </g>
  );
}

function ClampDetail() {
  return (
    <g transform="translate(690 280) scale(.333333)" fill="none" strokeWidth="3">
      <g stroke="#808080">
        <path d="M268 255v328M358 324v228M376 492v140M248 550v22" />
        <path d="M264 432h97v48h-97z" fill="#808080" stroke="none" />
        <path d="M375 493v60" strokeWidth="8" />
      </g>
      <g stroke="#fff">
        <path d="M264 433h-11v150h105v-31M283 480v73h90M361 432v46h43v50q-4 20-22 24h-28M249 493v75M376 497v12M379 553v77" />
        <path d="M250 570v60q2 32 30 48 34 14 64 0 30-14 34-50v-74M253 585v50" strokeWidth="5" />
        <path d="M310 498v36l64 22v14" strokeWidth="5" />
        <path d="M318 512l6 6M288 525v12" />
      </g>
      <path d="M284 527l14 5h12" stroke="#f0f" />
      <g stroke="#0f0">
        <path d="M42 322h122l144 190M36 424h122l132 106M42 511h134l178 39M24 622h126l158-48M30 757h189l49-92" />
        <path d="M714 94H571L310 505M702 190H568L316 523M684 322H538L404 478M693 433H548L378 506" />
        <path d="M690 565H539l-160-35M681 649H535L354 550M612 754H466l-88-120" />
      </g>
    </g>
  );
}

const CalloutText = styled.text`
  fill: #0f0;
  font-family: 'Roboto Condensed', 'Liberation Sans Narrow', Roboto, sans-serif;
  font-size: 20px;
  font-weight: 300;
`;

const ScaleText = styled.text`
  fill: #0f0;
  font: 7px 'Liberation Mono', monospace;
`;

function Drawing() {
  return (
    <Canvas role="img" aria-label="装配图">
      <g transform="translate(-85 -117)" shapeRendering="crispEdges">
        <path d="M346.500 253.500h598v423h-598z" fill="none" stroke="#fff" />
        <path d="M359.500 258.500h580v413h-580zM359.500 264.500h30v-6M645.500 253v9M645.500 668v9M936 465.500h8" fill="none" stroke="#00f" />
        <path d="M367.500 260.500h12v3h-12z" fill="none" stroke="#f0f" />
        <Assembly />
        <ClampDetail />
        {callouts.map(([label, x, y]) => <CalloutText key={label} x={x} y={y}>{label}</CalloutText>)}
        <ScaleText x="794" y="557">B</ScaleText>
        <ScaleText x="791" y="566">1:1</ScaleText>
        <path d="M791 559.500h18" stroke="#0f0" />
        <TitleBlock />
        <path d="M835 740.500h48M859.500 716v35" stroke="#fff" />
        <path d="M854.500 735.500h10v10h-10z" fill="none" stroke="#00ff7f" />
      </g>
    </Canvas>
  );
}

const navIcons = [
  ['首个布局', 'M1.500 1v7M7 1v7L3 4.500z'],
  ['上一布局', 'M6 1v7L2 4.500z'],
  ['下一布局', 'M3 1v7l4-3.500z'],
  ['末个布局', 'M2 1v7l4-3.500zM7.500 1v7'],
];

const layouts = [
  { name: '模型', width: 48, active: true },
  { name: '布局1', width: 55 },
  { name: '布局2', width: 55 },
];

function LayoutTabs() {
  return (
    <LayoutBar>
      {navIcons.map(([label, d]) => (
        <NavButton key={label} type="button" aria-label={label}>
          <svg width="9" height="9"><path d={d} fill="#666" stroke="#666" strokeWidth=".8" /></svg>
        </NavButton>
      ))}
      {layouts.map(({ name, width, active }) => (
        <LayoutTab key={name} type="button" $width={width} $active={active}>
          <LayoutShape viewBox={`0 0 ${width} 16`}>
            <path
              d={`M0 0l8 15.500h${width - 16}l8-15.500`}
              fill={active ? '#fdfdfd' : '#e8e8e8'}
              stroke="#999"
            />
          </LayoutShape>
          <span>{name}</span>
        </LayoutTab>
      ))}
    </LayoutBar>
  );
}

function App() {
  return (
    <>
      <GlobalStyle />
      <Page>
        <RibbonBar />
        <Workspace>
          <PropertyPanel />
          <Splitter />
          <DocumentArea>
            <DocumentTabs>
              <TabSlope viewBox="0 0 20 20">
                <path d="M0 20 17 2q1-1.500 3-1.500V20z" fill="#fdfdfd" />
                <path d="M0 20 17 2q1-1.500 3-1.500" fill="none" stroke="#999" />
              </TabSlope>
              <DocumentTab>
                装配图.dwg
                <PanelHeaderButton type="button" aria-label="关闭文档"><Icon name="close" /></PanelHeaderButton>
              </DocumentTab>
            </DocumentTabs>
            <Drawing />
            <LayoutTabs />
          </DocumentArea>
        </Workspace>
        <StatusBar />
      </Page>
    </>
  );
}

export default App;
